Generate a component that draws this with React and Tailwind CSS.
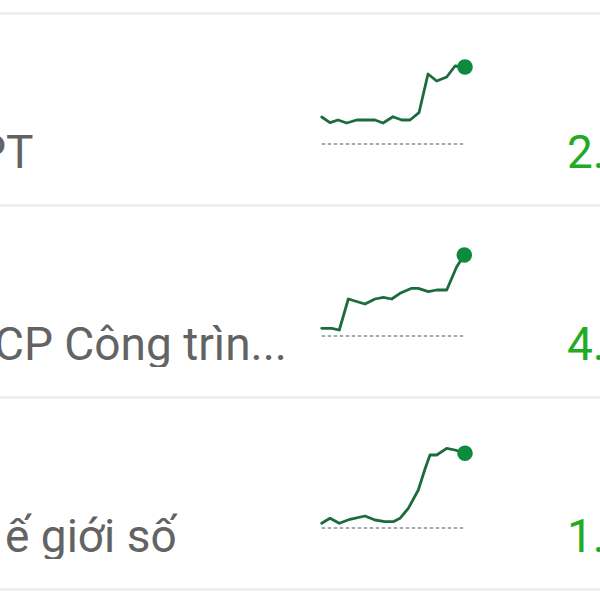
import React from "react";

const rows = [
  {
    name: "PT",
    nameOffset: -23,
    value: "2.15",
    points: [
      [6.7, 67], [15, 72.7], [23, 70], [31.7, 73], [41.7, 70], [60, 70], [68, 73], [78, 66.7],
      [86.7, 70], [95, 70], [104, 62.7], [113, 24], [121.7, 31], [131.7, 27], [140, 16], [150, 17],
    ],
    dot: [150, 17],
  },
  {
    name: "CP Công trìn...",
    nameOffset: -6,
    value: "4.20",
    points: [
      [6.7, 86.3], [16.7, 86.3], [24.3, 88], [33.3, 57], [50, 62], [60, 57], [68.3, 55.3], [76.7, 57],
      [85, 51.3], [96.7, 46.3], [103.3, 46.3], [113.3, 49.7], [121.7, 48], [131.7, 48], [141.7, 24.7], [149.3, 13],
    ],
    dot: [149.3, 13],
  },
  {
    name: "ế giới số",
    nameOffset: 5,
    value: "1.35",
    points: [
      [6.7, 89.3], [15, 84.3], [24.3, 89.3], [35, 85.3], [50, 82], [60, 86], [70, 87.7], [78.3, 87.7],
      [85, 84.3], [93.3, 74.3], [103.3, 56], [110, 35], [115, 21], [121.7, 21], [131.7, 14.3], [140, 16], [150, 19.3],
    ],
    dot: [150, 19.3],
  },
];

function Spark({ points, dot }) {
  const d = points.map((p, i) => (i === 0 ? "M" : "L") + p[0] + " " + p[1]).join(" ");
  return (
    <svg width="160" height="110" viewBox="0 0 160 110" className="block">
      <line x1="6.7" y1="94" x2="150" y2="94" stroke="#8392a2" strokeWidth="1.7" strokeDasharray="3.5 2.5" />
      <path d={d} fill="none" stroke="#1b6c3d" strokeWidth="2.8" strokeLinejoin="round" strokeLinecap="round" />
      <circle cx={dot[0]} cy={dot[1]} r="7.8" fill="#0c8a3e" />
    </svg>
  );
}

function Sep() {
  return <div className="h-[3px] bg-[#efefef]" />;
}

export default function App() {
  return (
    <div className="w-[600px] h-[600px] overflow-hidden bg-white" style={{ fontFamily: "Roboto, 'Noto Sans', sans-serif" }}>
      <div className="h-[12px]" />
      <Sep />
      {rows.map((r, i) => (
        <React.Fragment key={i}>
          <div className="h-[189px] flex items-start">
            <div className="w-[315px] shrink-0 overflow-hidden pt-[114px]">
              <div className="text-[46px] leading-none text-[#636363] whitespace-nowrap" style={{ marginLeft: r.nameOffset }}>
                {r.name}
              </div>
            </div>
            <div className="w-[160px] shrink-0 pt-[35px]">
              <Spark points={r.points} dot={r.dot} />
            </div>
            <div className="pl-[92px] pt-[114px] whitespace-nowrap text-[46px] leading-none text-[#1fab24]">
              {r.value}
            </div>
          </div>
          <Sep />
        </React.Fragment>
      ))}
    </div>
  );
}
